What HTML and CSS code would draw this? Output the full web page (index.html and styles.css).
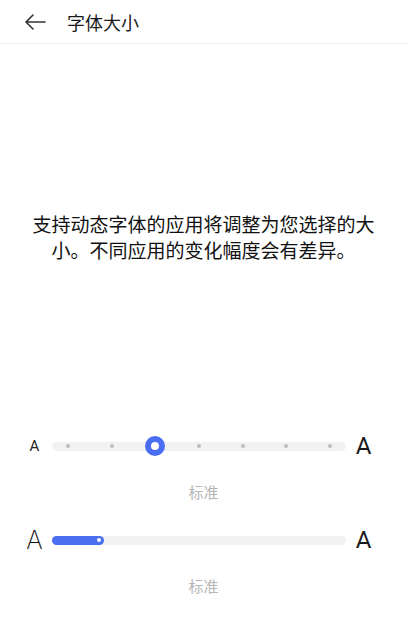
FILE: index.html
```html
<!DOCTYPE html>
<html>
    <head>
        <meta name="viewport" content="width=device-width, initial-scale=1.0">
        <title>字体大小</title>
        <link rel="stylesheet" href="styles.css">
    </head>
    <body>
        <div class="header">
            <svg class="back" width="22" height="16" viewBox="0 0 22 16">
                <path d="M21 8H2 M9 1L2 8l7 7" fill="none" stroke="#333" stroke-width="1.6" stroke-linecap="round" stroke-linejoin="round"/>
            </svg>
            <h1 class="title">字体大小</h1>
        </div>

        <p class="intro">支持动态字体的应用将调整为您选择的大小。不同应用的变化幅度会有差异。</p>

        <div class="row row-first">
            <span class="letter letter-small">A</span>
            <div class="track track-steps">
                <span class="dot"></span>
                <span class="dot"></span>
                <span class="thumb"></span>
                <span class="dot"></span>
                <span class="dot"></span>
                <span class="dot"></span>
                <span class="dot"></span>
            </div>
            <span class="letter letter-big">A</span>
        </div>
        <div class="label">标准</div>

        <div class="row">
            <span class="letter letter-thin">A</span>
            <div class="track">
                <div class="fill" style="width: 52px;">
                    <span class="fill-dot"></span>
                </div>
            </div>
            <span class="letter letter-big">A</span>
        </div>
        <div class="label">标准</div>
    </body>
</html>
```

FILE: styles.css
```css
*{
    padding: 0;
    margin: 0;
    box-sizing: border-box;
}
html { font-family: Roboto, "Noto Sans CJK SC", sans-serif; }
body { background: #fff; color: #1a1a1a; }

.header{
    height: 44px;
    display: flex;
    align-items: center;
    padding-left: 24px;
    border-bottom: 1px solid #efefef;
}
.back{ display: block; }
.title{
    font-size: 18px;
    font-weight: 400;
    margin-left: 21px;
    color: #1a1a1a;
}

.intro{
    margin-top: 169px;
    padding: 0 28px;
    font-size: 19px;
    line-height: 26px;
    text-align: center;
    color: #111;
}

.row{
    display: flex;
    align-items: center;
    height: 24px;
    padding: 0 26px 0 17px;
    margin-top: 25px;
}
.row-first{ margin-top: 169px; }

.letter{
    width: 35px;
    text-align: center;
    color: #222;
    line-height: 24px;
}
.letter-small{ font-size: 15px; }
.letter-big{ font-size: 24px; font-weight: 400; color: #1a1a1a; }
.letter-thin{ font-family: Inter, Lato, sans-serif; font-size: 25px; font-weight: 200; color: #111; }

.track{
    flex: 1;
    height: 9px;
    border-radius: 5px;
    background: #f2f2f2;
    display: flex;
    align-items: center;
}
.track-steps{
    justify-content: space-between;
    padding: 0 14px;
}
.dot{
    width: 4px;
    height: 4px;
    border-radius: 50%;
    background: #bdbdbd;
}
.thumb{
    width: 20px;
    height: 20px;
    margin: 0 -8px;
    border-radius: 50%;
    border: 6px solid #4a6ef2;
    background: #fff;
}

.fill{
    height: 9px;
    border-radius: 5px;
    background: #4a6ef2;
    display: flex;
    align-items: center;
    justify-content: flex-end;
    padding-right: 3px;
}
.fill-dot{
    width: 4px;
    height: 4px;
    border-radius: 50%;
    background: #fff;
}

.label{
    margin-top: 25px;
    text-align: center;
    font-size: 15px;
    line-height: 20px;
    color: #b5b5b5;
}
```
